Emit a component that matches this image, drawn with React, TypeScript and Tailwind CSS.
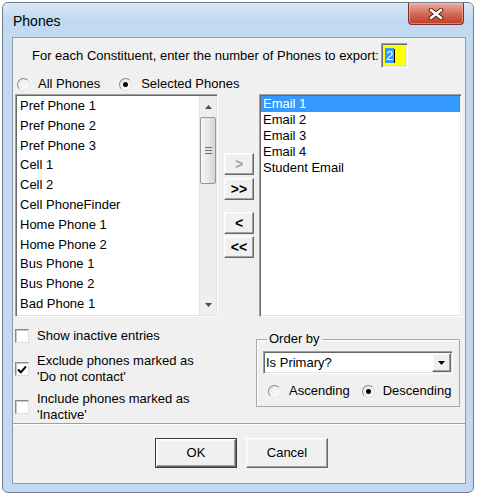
import React from 'react';

const leftItems = [
  'Pref Phone 1',
  'Pref Phone 2',
  'Pref Phone 3',
  'Cell 1',
  'Cell 2',
  'Cell PhoneFinder',
  'Home Phone 1',
  'Home Phone 2',
  'Bus Phone 1',
  'Bus Phone 2',
  'Bad Phone 1',
];

const rightItems = ['Email 1', 'Email 2', 'Email 3', 'Email 4', 'Student Email'];

// classic 3D borders
const sunken =
  'border border-t-[#a0a0a0] border-l-[#a0a0a0] border-r-white border-b-white shadow-[inset_1px_1px_0_#696969,inset_-1px_-1px_0_#e3e3e3]';
const raised =
  'border border-t-white border-l-white border-r-[#696969] border-b-[#696969] shadow-[inset_-1px_-1px_0_#a0a0a0,inset_1px_1px_0_#f8f8f8] bg-[#f0f0f0]';

function Triangle({ down = false, color = '#4d4d4d' }: { down?: boolean; color?: string }) {
  return (
    <svg width="7" height="4" viewBox="0 0 7 4">
      <polygon points={down ? '0,0 7,0 3.5,4' : '0,4 7,4 3.5,0'} fill={color} />
    </svg>
  );
}

function Radio({ checked }: { checked?: boolean }) {
  return (
    <span className="w-[13px] h-[13px] shrink-0 rounded-full border border-t-[#8a8a8a] border-l-[#8a8a8a] border-r-[#e2e2e2] border-b-[#e2e2e2] bg-gradient-to-br from-[#e6e6e6] to-white flex items-center justify-center">
      {checked && <span className="w-[5px] h-[5px] rounded-full bg-black" />}
    </span>
  );
}

function Checkbox({ checked }: { checked?: boolean }) {
  return (
    <span className="w-[14px] h-[14px] shrink-0 bg-white border border-t-[#8a8a8a] border-l-[#8a8a8a] border-r-[#e0e0e0] border-b-[#e0e0e0] shadow-[inset_1px_1px_0_#c8c8c8] flex items-center justify-center">
      {checked && (
        <svg width="10" height="9" viewBox="0 0 10 9">
          <path d="M1 4.5 L3.8 7.3 L9 1.5" stroke="#000" strokeWidth="2" fill="none" />
        </svg>
      )}
    </span>
  );
}

function MoveButton({ label, disabled, className = '' }: { label: string; disabled?: boolean; className?: string }) {
  return (
    <div
      className={`h-[22px] w-[30px] flex items-center justify-center text-[14px] font-bold ${raised} ${
        disabled ? 'text-[#a0a0a0]' : 'text-black'
      } ${className}`}
    >
      {label}
    </div>
  );
}

export default function App() {
  return (
    <div className="w-[482px] h-[500px] bg-white pt-[2px] pl-[2px] font-['Liberation_Sans',Arial,sans-serif] text-[13px] text-black">
      <div className="w-[472px] h-[491px] rounded-[6px] border border-[#707d8d] bg-[#c3d9f1] flex flex-col overflow-hidden">
        {/* title bar */}
        <div className="h-[34px] shrink-0 flex items-start justify-between pl-[10px] pr-[9px] bg-gradient-to-b from-[#dbe9f8] via-[#c0d8f1] to-[#c2d9f1]">
          <span className="self-center text-[14px] leading-[16px] text-black pt-[1px]">Phones</span>
          <div className="w-[56px] h-[22px] rounded-b-[4px] border border-t-0 border-[#7a3025] bg-gradient-to-b from-[#eab0a3] via-[#d26a55] to-[#bf3b26] shadow-[inset_0_0_0_1px_rgba(255,200,190,0.5)] flex items-center justify-center">
            <svg width="16" height="12" viewBox="0 0 16 12">
              <path d="M3 2 L13 10 M13 2 L3 10" stroke="#5a1e16" strokeWidth="4.5" strokeLinecap="round" />
              <path d="M3 2 L13 10 M13 2 L3 10" stroke="#ffffff" strokeWidth="2.6" strokeLinecap="round" />
            </svg>
          </div>
        </div>

        {/* client */}
        <div className="ml-[9px] mr-[7px] h-[447px] shrink-0 border border-[#8f9caa] bg-[#f0f0f0] flex flex-col">
          {/* header */}
          <div className="mt-[5px] h-[25px] pl-[19px] flex items-center">
            <span className="leading-[16px] pt-[1px]">For each Constituent, enter the number of Phones to export:</span>
            <div className={`ml-[2px] w-[27px] h-[25px] bg-[#ffff00] ${sunken} flex items-center pl-[3px]`}>
              <span className="bg-[#3399ff] text-white leading-[15px] px-[1px]">2</span>
              <span className="w-[1px] h-[14px] bg-black" />
            </div>
          </div>

          {/* radios */}
          <div className="mt-[8px] h-[16px] pl-[4px] flex items-center">
            <Radio />
            <span className="ml-[8px] mr-[19px] leading-[16px]">All Phones</span>
            <Radio checked />
            <span className="ml-[9px] leading-[16px]">Selected Phones</span>
          </div>

          {/* lists */}
          <div className="mt-[2px] h-[223px] flex">
            <div className={`ml-[2px] w-[203px] h-[223px] bg-white ${sunken} flex p-[1px]`}>
              <div className="flex-1 pl-[3px] overflow-hidden">
                {leftItems.map((item) => (
                  <div key={item} className="leading-[19.8px] whitespace-nowrap">
                    {item}
                  </div>
                ))}
              </div>
              <div className="w-[17px] flex flex-col bg-[#eeeeee] border-l border-[#e4e4e4]">
                <div className="h-[21px] flex items-center justify-center">
                  <Triangle />
                </div>
                <div className="h-[67px] mx-[0px] rounded-[2px] border border-[#979797] bg-gradient-to-r from-[#f6f6f6] via-[#e8e8e8] to-[#d4d4d4] flex flex-col items-center justify-center gap-[2px]">
                  <span className="w-[7px] h-[1px] bg-[#6e6e6e]" />
                  <span className="w-[7px] h-[1px] bg-[#6e6e6e]" />
                  <span className="w-[7px] h-[1px] bg-[#6e6e6e]" />
                </div>
                <div className="flex-1" />
                <div className="h-[21px] flex items-center justify-center">
                  <Triangle down />
                </div>
              </div>
            </div>

            <div className="ml-[6px] w-[30px] pt-[59px] flex flex-col">
              <MoveButton label=">" disabled />
              <MoveButton label=">>" className="mt-[3px]" />
              <MoveButton label="<" className="mt-[12px]" />
              <MoveButton label="<<" className="mt-[2px]" />
            </div>

            <div className={`ml-[5px] w-[203px] h-[223px] bg-white ${sunken} p-[1px]`}>
              {rightItems.map((item, i) => (
                <div
                  key={item}
                  className={`leading-[16px] pl-[2px] whitespace-nowrap ${i === 0 ? 'bg-[#3399ff] text-white' : ''}`}
                >
                  {item}
                </div>
              ))}
            </div>
          </div>

          {/* options */}
          <div className="h-[106px] flex">
            <div className="pl-[2px] pt-[11px] flex flex-col">
              <div className="h-[16px] flex items-center">
                <Checkbox />
                <span className="ml-[8px] leading-[16px]">Show inactive entries</span>
              </div>
              <div className="mt-[9px] flex items-center">
                <Checkbox checked />
                <span className="ml-[8px] leading-[16px]">
                  Exclude phones marked as
                  <br />
                  'Do not contact'
                </span>
              </div>
              <div className="mt-[6px] flex items-center">
                <Checkbox />
                <span className="ml-[8px] leading-[16px]">
                  Include phones marked as
                  <br />
                  'Inactive'
                </span>
              </div>
            </div>

            <fieldset className="ml-auto mr-[5px] mt-[15px] w-[204px] h-[75px] border border-[#a8a8a8] shadow-[inset_1px_1px_0_#ffffff] pb-[7px]">
              <legend className="ml-[10px] px-[2px] leading-[14px]">Order by</legend>
              <div className={`mt-[5px] ml-[6px] w-[190px] h-[23px] bg-white ${sunken} flex items-center p-[1px]`}>
                <span className="flex-1 pl-[1px] leading-[16px]">Is Primary?</span>
                <div className={`w-[19px] h-full flex items-center justify-center ${raised}`}>
                  <Triangle down color="#000" />
                </div>
              </div>
              <div className="mt-[9px] h-[16px] pl-[11px] flex items-center">
                <Radio />
                <span className="ml-[8px] mr-[12px] leading-[16px]">Ascending</span>
                <Radio checked />
                <span className="ml-[8px] leading-[16px]">Descending</span>
              </div>
            </fieldset>
          </div>

          {/* separator */}
          <div className="h-[2px] border-t border-[#a0a0a0] border-b border-b-white" />

          {/* buttons */}
          <div className="mt-[13px] pl-[5px] flex justify-center gap-[9px]">
            <div className="w-[82px] h-[30px] border border-[#3c3c3c]">
              <div className={`w-full h-full flex items-center justify-center ${raised}`}>OK</div>
            </div>
            <div className={`w-[82px] h-[30px] flex items-center justify-center ${raised}`}>Cancel</div>
          </div>
        </div>
      </div>
    </div>
  );
}
